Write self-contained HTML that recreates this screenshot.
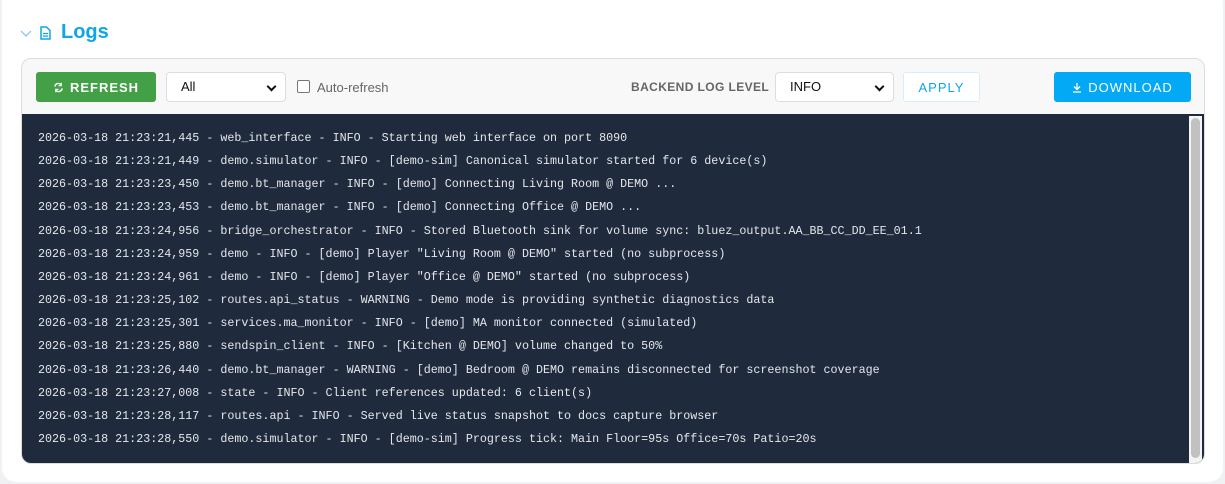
<!DOCTYPE html>
<html><head><style>
*{box-sizing:border-box;margin:0;padding:0}
body{width:1225px;height:484px;background:#f0f1f3;font-family:"Liberation Sans",sans-serif;position:relative;overflow:hidden}
.card{position:absolute;left:2px;top:-10px;width:1221px;height:492px;background:#fff;border-radius:14px}
.title{position:absolute;left:20px;top:21px;display:flex;align-items:center;color:#0ea5e9}
.title span{font-size:20px;font-weight:bold;margin-left:10px}
.panel{position:absolute;left:21px;top:58px;width:1184px;height:406px;background:#f8f8f8;border:1px solid #ddd;border-radius:10px;overflow:hidden}
.btn{position:absolute;top:13px;height:30px;border-radius:3px;font-size:13px;font-weight:bold;letter-spacing:1px;display:flex;align-items:center;justify-content:center;gap:6px}
.sel{position:absolute;top:13px;height:30px;background:#fff;border:1px solid #ddd;border-radius:4px;font-size:13px;color:#111;padding-left:14px;line-height:28px}
.sel:after{content:"";position:absolute;right:10px;top:10px;width:5px;height:5px;border-right:2px solid #111;border-bottom:2px solid #111;transform:rotate(45deg)}
.log{position:absolute;left:0;top:55px;width:1184px;height:351px;background:#1f2a3c;color:#e5e7eb;font-family:"Liberation Mono",monospace;font-size:11.7px;padding:13px 0 0 16px;line-height:23.15px;white-space:pre}
.sb{position:absolute;right:2px;top:57px;width:13px;height:347px;background:#f4f4f4}
.sb div{position:absolute;left:2px;top:2px;width:9px;height:340px;background:#c1c1c1;border-radius:5px}
</style></head><body>
<div class="card"></div>
<div class="title">
<svg width="12" height="10" viewBox="0 0 12 10"><path d="M1 3l5 5 5-5" fill="none" stroke="#7dc4ea" stroke-width="1.2"/></svg>
<svg style="margin-left:8px" width="11" height="14" viewBox="0 0 11 14"><path d="M1 1h5.5l3.5 3.5v8.5h-9z" fill="none" stroke="#0ea5e9" stroke-width="1.5"/><path d="M3 7.5h5M3 10h5" stroke="#0ea5e9" stroke-width="1.2"/></svg>
<span>Logs</span></div>
<div class="panel">
<div class="btn" style="left:14px;width:120px;background:#43a047;color:#fff">
<svg width="11" height="11" viewBox="0 0 12 12"><path d="M2 5a4 4 0 0 1 7-2M10 7a4 4 0 0 1-7 2" fill="none" stroke="#fff" stroke-width="1.6"/><path d="M9 1v3h-3M3 11V8h3" fill="none" stroke="#fff" stroke-width="1.4"/></svg>REFRESH</div>
<div class="sel" style="left:144px;width:120px">All</div>
<div style="position:absolute;left:275px;top:21px;width:13px;height:13px;border:1px solid #777;border-radius:2px;background:#fff"></div>
<div style="position:absolute;left:295px;top:21px;font-size:13px;color:#666">Auto-refresh</div>
<div style="position:absolute;left:609px;top:21px;font-size:12px;font-weight:bold;color:#666;letter-spacing:.4px">BACKEND LOG LEVEL</div>
<div class="sel" style="left:753px;width:119px">INFO</div>
<div class="btn" style="left:881px;width:77px;background:#fff;border:1px solid #d6eefa;color:#0ea5e9;font-weight:normal">APPLY</div>
<div class="btn" style="left:1032px;width:137px;background:#03a9f4;color:#fff;font-weight:normal">
<svg width="10" height="11" viewBox="0 0 10 11"><path d="M5 1v6M2 4.5l3 3 3-3M1 10h8" fill="none" stroke="#fff" stroke-width="1.3"/></svg>DOWNLOAD</div>
<div class="log">2026-03-18 21:23:21,445 - web_interface - INFO - Starting web interface on port 8090
2026-03-18 21:23:21,449 - demo.simulator - INFO - [demo-sim] Canonical simulator started for 6 device(s)
2026-03-18 21:23:23,450 - demo.bt_manager - INFO - [demo] Connecting Living Room @ DEMO ...
2026-03-18 21:23:23,453 - demo.bt_manager - INFO - [demo] Connecting Office @ DEMO ...
2026-03-18 21:23:24,956 - bridge_orchestrator - INFO - Stored Bluetooth sink for volume sync: bluez_output.AA_BB_CC_DD_EE_01.1
2026-03-18 21:23:24,959 - demo - INFO - [demo] Player "Living Room @ DEMO" started (no subprocess)
2026-03-18 21:23:24,961 - demo - INFO - [demo] Player "Office @ DEMO" started (no subprocess)
2026-03-18 21:23:25,102 - routes.api_status - WARNING - Demo mode is providing synthetic diagnostics data
2026-03-18 21:23:25,301 - services.ma_monitor - INFO - [demo] MA monitor connected (simulated)
2026-03-18 21:23:25,880 - sendspin_client - INFO - [Kitchen @ DEMO] volume changed to 50%
2026-03-18 21:23:26,440 - demo.bt_manager - WARNING - [demo] Bedroom @ DEMO remains disconnected for screenshot coverage
2026-03-18 21:23:27,008 - state - INFO - Client references updated: 6 client(s)
2026-03-18 21:23:28,117 - routes.api - INFO - Served live status snapshot to docs capture browser
2026-03-18 21:23:28,550 - demo.simulator - INFO - [demo-sim] Progress tick: Main Floor=95s Office=70s Patio=20s</div>
<div class="sb"><div></div></div>
</div>
</body></html>
